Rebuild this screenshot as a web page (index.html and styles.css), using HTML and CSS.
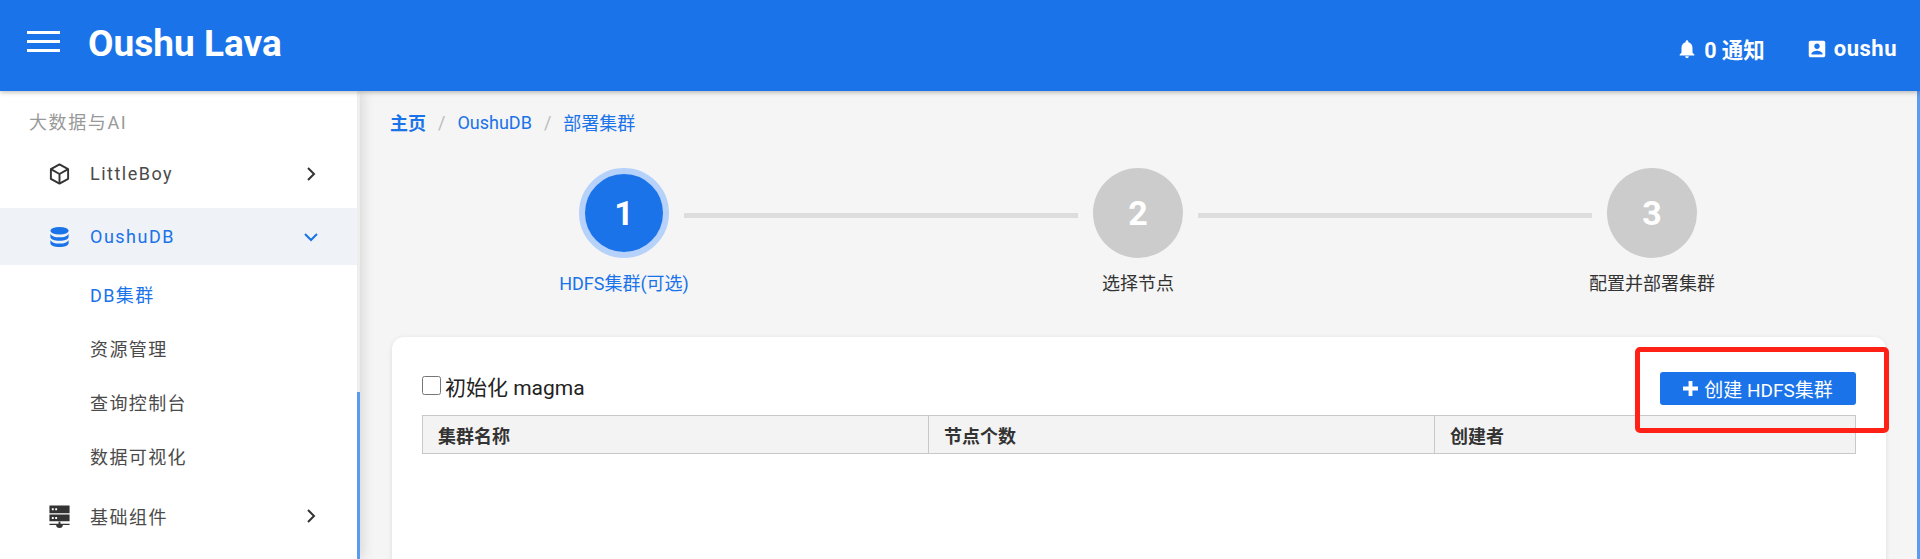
FILE: index.html
```html
<!DOCTYPE html>
<html lang="zh">
<head>
    <meta charset="UTF-8">
    <title>Oushu Lava</title>
    <link rel="stylesheet" href="styles.css">
</head>
<body>
    <header class="topbar">
        <div class="hamburger"><span></span><span></span><span></span></div>
        <h1 class="brand">Oushu Lava</h1>
        <div class="top-links">
            <a class="top-link notice">
                <svg viewBox="0 0 24 24" width="22" height="22"><path d="M12 22c1.1 0 2-.9 2-2h-4c0 1.1.9 2 2 2zm6-6v-5c0-3.07-1.63-5.64-4.5-6.32V4c0-.83-.67-1.5-1.5-1.5s-1.5.67-1.5 1.5v.68C7.64 5.36 6 7.92 6 11v5l-2 2v1h16v-1l-2-2z"/></svg>
                0 通知
            </a>
            <a class="top-link user">
                <svg viewBox="0 0 24 24" width="22" height="22"><path d="M3 5v14c0 1.1.89 2 2 2h14c1.1 0 2-.9 2-2V5c0-1.1-.9-2-2-2H5c-1.11 0-2 .9-2 2zm12 4c0 1.66-1.34 3-3 3s-3-1.34-3-3 1.34-3 3-3 3 1.34 3 3zm-9 8c0-2 4-3.1 6-3.1s6 1.1 6 3.1v1H6v-1z"/></svg>
                oushu
            </a>
        </div>
    </header>

    <div class="layout">
        <aside class="sidebar">
            <nav class="menu">
                <div class="menu-group">大数据与AI</div>
                <div class="menu-item littleboy">
                    <svg class="menu-icon" viewBox="0 0 24 24" fill="none" stroke="currentColor" stroke-width="2" stroke-linejoin="round"><path d="M12 2l9 5v10l-9 5-9-5V7z"/><path d="M3 7l9 5 9-5M12 12v10"/></svg>
                    <span>LittleBoy</span>
                    <svg class="chevron" viewBox="0 0 12 16" fill="none" stroke="currentColor" stroke-width="2"><path d="M3 2l6 6-6 6"/></svg>
                </div>
                <div class="menu-item open">
                    <svg class="menu-icon" viewBox="0 0 24 24" fill="currentColor"><ellipse cx="12" cy="5.5" rx="9.5" ry="4"/><path d="M2.5 8.5c1 2.6 5 3.8 9.500 3.800s8.500-1.200 9.500-3.800V12c0 2.300-4.300 4-9.500 4s-9.500-1.700-9.500-4z"/><path d="M2.500 15c1 2.600 5 3.800 9.500 3.800s8.500-1.200 9.500-3.800v3.500c0 2.300-4.300 4-9.500 4s-9.500-1.700-9.500-4z"/></svg>
                    <span>OushuDB</span>
                    <svg class="chevron down" viewBox="0 0 16 12" fill="none" stroke="currentColor" stroke-width="2"><path d="M2 3l6 6 6-6"/></svg>
                </div>
                <div class="submenu">
                    <div class="submenu-item active">DB集群</div>
                    <div class="submenu-item">资源管理</div>
                    <div class="submenu-item">查询控制台</div>
                    <div class="submenu-item">数据可视化</div>
                </div>
                <div class="menu-item basic">
                    <svg class="menu-icon" viewBox="0 0 24 24" fill="currentColor"><path d="M1.500 1h21v8h-21zM1.500 10.500h21v7h-21zM11 18h2v2h9.500v1.500h-7a3.500 3 0 0 1-7 0h-7V20H11z"/><path fill="#fff" d="M4 4h2v2H4zM7.500 4h2v2h-2zM4 13h2v2H4zM7.500 13h2v2h-2z"/></svg>
                    <span>基础组件</span>
                    <svg class="chevron" viewBox="0 0 12 16" fill="none" stroke="currentColor" stroke-width="2"><path d="M3 2l6 6-6 6"/></svg>
                </div>
            </nav>
            <div class="side-scroll"><div class="side-thumb"></div></div>
        </aside>

        <main class="content">
            <div class="breadcrumb">
                <a class="crumb-home">主页</a>
                <span class="crumb-sep">/</span>
                <a>OushuDB</a>
                <span class="crumb-sep">/</span>
                <a>部署集群</a>
            </div>

            <div class="stepper">
                <div class="step current">
                    <div class="step-num">1</div>
                    <div class="step-label">HDFS集群(可选)</div>
                </div>
                <div class="step-line"></div>
                <div class="step">
                    <div class="step-num">2</div>
                    <div class="step-label">选择节点</div>
                </div>
                <div class="step-line"></div>
                <div class="step">
                    <div class="step-num">3</div>
                    <div class="step-label">配置并部署集群</div>
                </div>
            </div>

            <section class="card">
                <div class="card-tools">
                    <label class="init-check"><input type="checkbox">初始化 magma</label>
                    <button class="btn-create">
                        <svg viewBox="0 0 14 14" width="15" height="15"><path fill="#fff" d="M5.200 0h3.600v5.200H14v3.600H8.800V14H5.200V8.800H0V5.200h5.200z"/></svg>
                        创建 HDFS集群
                    </button>
                </div>
                <table class="cluster-table">
                    <thead>
                        <tr><th class="col-name">集群名称</th><th class="col-count">节点个数</th><th>创建者</th></tr>
                    </thead>
                </table>
                <div class="annotation"></div>
            </section>
        </main>
        <div class="page-scroll"></div>
    </div>
</body>
</html>
```

FILE: styles.css
```css
:root {
    --primary-color: #1a73e8;
    --background-color: #f5f5f5;
    --text-color: #333;
}

* {
    margin: 0;
    padding: 0;
    box-sizing: border-box;
}

html, body {
    height: 559px;
    overflow: hidden;
}

body {
    font-family: Roboto, "Noto Sans CJK SC", sans-serif;
    font-size: 16px;
    color: var(--text-color);
    background-color: var(--background-color);
}

/* top bar */
.topbar {
    height: 91px;
    background-color: var(--primary-color);
    color: white;
    display: flex;
    align-items: center;
    padding: 0 23px 0 27px;
    position: relative;
    z-index: 3;
    box-shadow: 0 1px 5px rgba(0,0,0,0.3);
}

.hamburger {
    width: 33px;
    height: 21px;
    margin-top: -8px;
    display: flex;
    flex-direction: column;
    justify-content: space-between;
}

.hamburger span {
    height: 3px;
    background-color: white;
}

.brand {
    font-size: 37px;
    font-weight: 700;
    line-height: 1;
    margin: -5px 0 0 28px;
}

.top-links {
    margin-left: auto;
    display: flex;
    align-items: center;
    gap: 41px;
    padding-top: 6px;
}

.top-link {
    display: flex;
    align-items: center;
    gap: 6px;
    font-size: 22px;
    font-weight: 700;
}

.top-link.notice {
    font-size: 21.500px;
}

.top-link.user {
    letter-spacing: 0.500px;
}

.top-link svg {
    fill: white;
}

/* side menu */
.layout {
    display: flex;
    height: 468px;
}

.sidebar {
    width: 360px;
    flex: none;
    display: flex;
    background-color: white;
    position: relative;
    z-index: 2;
    box-shadow: 3px 0 12px rgba(0,0,0,0.12);
}

.menu {
    width: 357px;
    padding-top: 16px;
}

.side-scroll {
    width: 3px;
    background-color: #eee;
    padding-top: 301px;
}

.side-thumb {
    height: 167px;
    background-color: #5b9bf3;
}

.menu-group {
    color: #999;
    font-size: 18px;
    line-height: 32px;
    letter-spacing: 1.600px;
    padding-left: 29px;
}

.menu-item {
    height: 57px;
    display: flex;
    align-items: center;
    padding-left: 48px;
    font-size: 18px;
    letter-spacing: 1.500px;
    color: #4a4a4a;
}

.menu-item span {
    margin-left: 19px;
}

.menu-item.open {
    background-color: #eff2f6;
    color: var(--primary-color);
}

.menu-icon {
    width: 23px;
    height: 24px;
    flex: none;
    color: #333;
}

.open .menu-icon {
    color: var(--primary-color);
}

.chevron {
    width: 12px;
    height: 16px;
    margin-left: auto;
    margin-right: 40px;
    color: #333;
}

.chevron.down {
    width: 16px;
    height: 12px;
    margin-right: 38px;
    color: var(--primary-color);
}

.littleboy {
    margin: 6px 0;
}

.basic {
    margin-top: 2px;
}

.submenu {
    padding-top: 4px;
}

.submenu-item {
    height: 54px;
    line-height: 54px;
    padding-left: 90px;
    font-size: 18px;
    letter-spacing: 1.400px;
    color: #4a4a4a;
}

.submenu-item.active {
    color: var(--primary-color);
}

/* main */
.content {
    flex: 1;
    min-width: 0;
    padding: 0 31px 0 32px;
}

.breadcrumb {
    height: 62px;
    display: flex;
    align-items: center;
    gap: 12px;
    margin-left: -2px;
    color: var(--primary-color);
    font-size: 18px;
}

.crumb-home {
    font-weight: 700;
}

.crumb-sep {
    color: #bbb;
}

.stepper {
    width: 1148px;
    margin: 15px 0 0 172px;
    display: flex;
    align-items: flex-start;
}

.step {
    width: 120px;
    flex: none;
    display: flex;
    flex-direction: column;
    align-items: center;
    color: var(--text-color);
}

.step-num {
    width: 90px;
    height: 90px;
    border-radius: 50%;
    background-color: #ccc;
    color: white;
    font-size: 34px;
    font-weight: 700;
    display: flex;
    align-items: center;
    justify-content: center;
}

.current .step-num {
    background-color: var(--primary-color);
    border: 6px solid #b6d2fb;
}

.step-label {
    margin-top: 14px;
    font-size: 18px;
    line-height: 24px;
    white-space: nowrap;
}

.current .step-label {
    color: var(--primary-color);
}

.step-line {
    flex: 1;
    height: 5px;
    margin-top: 45px;
    background-color: #ddd;
}

.card {
    position: relative;
    margin-top: 41px;
    height: 300px;
    background-color: white;
    border-radius: 12px;
    padding: 35px 30px 0;
    box-shadow: 0 1px 5px rgba(0,0,0,0.1);
}

.card-tools {
    display: flex;
    align-items: center;
    justify-content: space-between;
    height: 33px;
    margin-bottom: 10px;
}

.init-check {
    display: flex;
    align-items: center;
    gap: 4px;
    font-size: 21px;
    color: #222;
    margin-top: -6px;
}

.init-check input {
    width: 19px;
    height: 19px;
    margin: 0;
}

.btn-create {
    width: 196px;
    height: 33px;
    border: none;
    border-radius: 3px;
    background-color: var(--primary-color);
    color: white;
    font-family: inherit;
    font-size: 19px;
    display: flex;
    align-items: center;
    justify-content: center;
    gap: 6px;
}

.cluster-table {
    width: 100%;
    table-layout: fixed;
    border-collapse: collapse;
}

.cluster-table th {
    height: 38px;
    padding-left: 15px;
    text-align: left;
    font-size: 18px;
    background-color: #f3f3f3;
    border: 1px solid #c8c8c8;
}

.cluster-table .col-name {
    width: 506px;
}

.cluster-table .col-count {
    width: 506px;
}

/* red marker drawn over the screenshot */
.annotation {
    position: absolute;
    left: 1243px;
    top: 10px;
    width: 254px;
    height: 86px;
    border: 5px solid #ff2116;
    border-radius: 5px;
}

.page-scroll {
    width: 3px;
    flex: none;
    background-color: #5b9bf3;
}
```
